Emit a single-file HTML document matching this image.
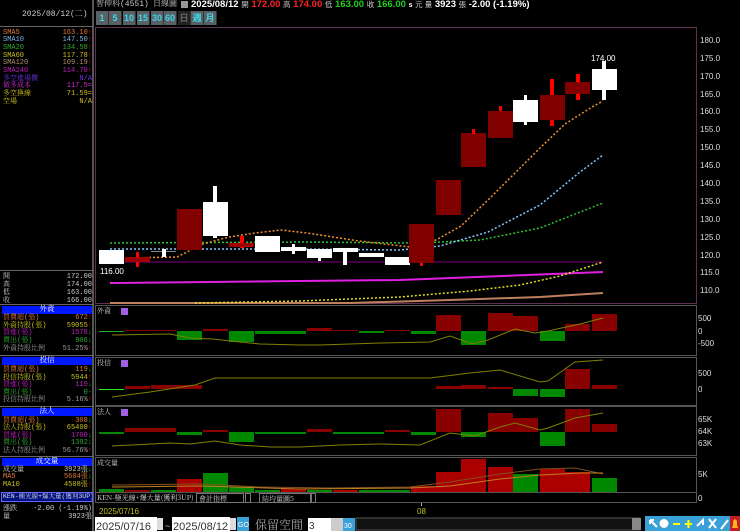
<!DOCTYPE html>
<html><head><meta charset="utf-8">
<style>
*{margin:0;padding:0;box-sizing:border-box}
body{width:740px;height:531px;background:#000;overflow:hidden;position:relative;font-family:"Liberation Mono","Noto Serif CJK TC",monospace;font-size:8px;color:#ccc}
.a{position:absolute;white-space:nowrap;line-height:8px}
.r{position:absolute;left:3px;width:89px;height:8px;line-height:8px;font-size:7px}
.r span:last-child{position:absolute;right:0}
.hd{position:absolute;left:2px;width:90px;height:8px;background:#0018ff;color:#fff;text-align:center;font-size:7.5px;line-height:8px}
.up{color:#f00}.dn{color:#0c0}
.btn{position:absolute;top:11px;height:14px;width:13px;background:#5a6066;color:#3cd8e8;font:bold 9px "Liberation Sans",sans-serif;text-align:center;line-height:14px;border-right:1px solid #333}
</style></head><body>
<div style="position:absolute;left:0;top:0;width:94px;height:531px;border-right:2px solid #555"></div>
<div style="position:absolute;left:0;top:26px;width:94px;height:1px;background:#666"></div>
<div class="a" style="left:22px;top:11px;color:#ccc;font-size:8px">2025/08/12(二)</div>

<div class="r" style="top:29px;color:#e07a3a"><span>SMA5</span><span>163.10<b class="up">↑</b></span></div>
<div class="r" style="top:36px;color:#7ab8e8"><span>SMA10</span><span>147.50<b class="up">↑</b></span></div>
<div class="r" style="top:44px;color:#2eaa2e"><span>SMA20</span><span>134.58<b class="up">↑</b></span></div>
<div class="r" style="top:52px;color:#c8c020"><span>SMA60</span><span>117.78<b class="up">↑</b></span></div>
<div class="r" style="top:59px;color:#b09070"><span>SMA120</span><span>109.19<b class="up">↑</b></span></div>
<div class="r" style="top:67px;color:#c020c0"><span>SMA240</span><span>114.70<b class="up">↑</b></span></div>
<div class="r" style="top:75px;color:#7030e0"><span>多空進場價</span><span>N/A</span></div>
<div class="r" style="top:82px;color:#d030d0"><span>做多成本</span><span>117.5=</span></div>
<div class="r" style="top:90px;color:#d0c020"><span>多空換線</span><span>71.59=</span></div>
<div class="r" style="top:98px;color:#d0c020"><span>空場</span><span>N/A</span></div>

<div style="position:absolute;left:0;top:270px;width:94px;height:1px;background:#666"></div>
<div class="r" style="top:273px;color:#ccc"><span>開</span><span>172.00</span></div>
<div class="r" style="top:281px;color:#ccc"><span>高</span><span>174.00</span></div>
<div class="r" style="top:289px;color:#ccc"><span>低</span><span>163.00</span></div>
<div class="r" style="top:297px;color:#ccc"><span>收</span><span>166.00</span></div>
<div style="position:absolute;left:0;top:304px;width:94px;height:1px;background:#666"></div>

<div class="hd" style="top:306px">外資</div>
<div class="r" style="top:314px;color:#e07a3a"><span>買賣超(張)</span><span>672<b class="up">↑</b></span></div>
<div class="r" style="top:322px;color:#c8c020"><span>外資持股(張)</span><span>59055<b class="up">↑</b></span></div>
<div class="r" style="top:329px;color:#c020c0"><span>買進(張)</span><span>1578<b class="dn">↓</b></span></div>
<div class="r" style="top:337px;color:#2eaa2e"><span>賣出(張)</span><span>906<b class="dn">↓</b></span></div>
<div class="r" style="top:345px;color:#999"><span>外資持股比例</span><span>51.25%<b class="up">↑</b></span></div>
<div style="position:absolute;left:0;top:355px;width:94px;height:1px;background:#666"></div>
<div class="hd" style="top:357px">投信</div>
<div class="r" style="top:366px;color:#e07a3a"><span>買賣超(張)</span><span>119<b class="dn">↓</b></span></div>
<div class="r" style="top:374px;color:#c8c020"><span>投信持股(張)</span><span>5944<b class="up">↑</b></span></div>
<div class="r" style="top:381px;color:#c020c0"><span>買進(張)</span><span>119<b class="dn">↓</b></span></div>
<div class="r" style="top:389px;color:#2eaa2e"><span>賣出(張)</span><span>0-</span></div>
<div class="r" style="top:396px;color:#999"><span>投信持股比例</span><span>5.16%<b class="up">↑</b></span></div>
<div style="position:absolute;left:0;top:406px;width:94px;height:1px;background:#666"></div>
<div class="hd" style="top:408px">法人</div>
<div class="r" style="top:417px;color:#e07a3a"><span>買賣超(張)</span><span>308<b class="dn">↓</b></span></div>
<div class="r" style="top:424px;color:#c8c020"><span>法人持股(張)</span><span>65400<b class="up">↑</b></span></div>
<div class="r" style="top:432px;color:#c020c0"><span>買進(張)</span><span>1700<b class="dn">↓</b></span></div>
<div class="r" style="top:439px;color:#2eaa2e"><span>賣出(張)</span><span>1392<b class="dn">↓</b></span></div>
<div class="r" style="top:447px;color:#999"><span>法人持股比例</span><span>56.76%<b class="up">↑</b></span></div>
<div style="position:absolute;left:0;top:456px;width:94px;height:1px;background:#666"></div>
<div class="hd" style="top:458px">成交量</div>
<div class="r" style="top:466px;color:#ccc"><span>成交量</span><span>3923張<b class="dn">↓</b></span></div>
<div class="r" style="top:473px;color:#e07a3a"><span>MA5</span><span>5604張<b class="dn">↓</b></span></div>
<div class="r" style="top:481px;color:#c8c020"><span>MA10</span><span>4508張<b class="up">↑</b></span></div>
<div style="position:absolute;left:1px;top:492px;width:92px;height:10px;border:1px solid #66f;background:#001080;color:#ddd;font-size:6.5px;line-height:8px;padding-left:1px;overflow:hidden;white-space:nowrap">KEN-極光線+爆大量(獲利3UP)</div>
<div class="r" style="top:505px;color:#ccc"><span>漲跌</span><span>-2.00 (-1.19%)</span></div>
<div class="r" style="top:513px;color:#ccc"><span>量</span><span>3923張</span></div>

<div class="a" style="left:96px;top:1px;font-size:8px;color:#ccc">智伸科(4551)</div>
<div class="a" style="left:153px;top:1px;font-size:8px;color:#ccc">日線圖</div>
<div style="position:absolute;left:181px;top:1px;width:7px;height:7px;background:#999"></div>
<div class="a" style="left:191px;top:0;font:bold 9.5px 'Liberation Sans',sans-serif;color:#fff;line-height:10px">2025/08/12 <span style="font-weight:normal;font-size:7.5px;color:#ccc">開</span> <span style="color:#f22">172.00</span> <span style="font-weight:normal;font-size:7.5px;color:#ccc">高</span> <span style="color:#f22">174.00</span> <span style="font-weight:normal;font-size:7.5px;color:#ccc">低</span> <span style="color:#2c2">163.00</span> <span style="font-weight:normal;font-size:7.5px;color:#ccc">收</span> <span style="color:#2c2">166.00</span> <span style="font-size:7px">s</span> <span style="font-weight:normal;font-size:7.5px;color:#ccc">元 量</span> 3923 <span style="font-weight:normal;font-size:7.5px;color:#ccc">張</span> -2.00 (-1.19%)</div>
<div class="btn" style="left:96px">1</div><div class="btn" style="left:109px">5</div><div class="btn" style="left:123px">10</div><div class="btn" style="left:137px">15</div><div class="btn" style="left:151px">30</div><div class="btn" style="left:164px">60</div>
<div class="btn" style="left:178px;background:#222;color:#666">日</div><div class="btn" style="left:191px">週</div><div class="btn" style="left:204px">月</div>

<svg style="position:absolute;left:0;top:0" width="740" height="531" font-family="Liberation Sans,sans-serif">
<rect x="95.5" y="27.5" width="601" height="276" fill="none" stroke="#603050"/>
<g fill="none" stroke="#555">
<rect x="95.5" y="305.5" width="601" height="50"/>
<rect x="95.5" y="357.5" width="601" height="48"/>
<rect x="95.5" y="406.5" width="601" height="49"/>
<rect x="95.5" y="457.5" width="601" height="35"/>
<rect x="95.5" y="492.5" width="601" height="10"/>
</g>
<g fill="#ddd" font-size="8">
<text x="700" y="43">180.0</text><text x="700" y="61">175.0</text><text x="700" y="79">170.0</text><text x="700" y="97">165.0</text><text x="700" y="114">160.0</text><text x="700" y="132">155.0</text><text x="700" y="150">150.0</text><text x="700" y="168">145.0</text><text x="700" y="186">140.0</text><text x="700" y="204">135.0</text><text x="700" y="222">130.0</text><text x="700" y="240">125.0</text><text x="700" y="258">120.0</text><text x="700" y="275">115.0</text><text x="700" y="293">110.0</text>
<text x="698" y="321">500</text><text x="698" y="334">0</text><text x="698" y="346">-500</text>
<text x="698" y="376">500</text><text x="698" y="392">0</text>
<text x="698" y="422">65K</text><text x="698" y="434">64K</text><text x="698" y="446">63K</text>
<text x="698" y="477">5K</text><text x="698" y="501">0</text>
</g>
<polyline points="110,262 603,262" stroke="#800080" stroke-width="1" fill="none"/>
<polyline points="110,283 400,280 603,272" stroke="#e020e0" stroke-width="2" fill="none"/>
<polyline points="110,303 350,303 450,300 540,297 603,293" stroke="#c08060" stroke-width="2" fill="none"/>
<polyline points="195,303 300,301 400,297 470,291 520,285 560,276 603,262" stroke="#e0e020" stroke-width="1.5" stroke-dasharray="2,2" fill="none"/>
<polyline points="110,243 300,242 420,243 480,240 540,228 603,203" stroke="#30c030" stroke-width="1.5" stroke-dasharray="2,2" fill="none"/>
<polyline points="110,249 300,249 400,250 440,246 488,232 540,205 580,172 603,155" stroke="#80c8ff" stroke-width="1.5" stroke-dasharray="2,2" fill="none"/>
<polyline points="125,258 177,257 203,244 229,237 255,233 281,230 307,233 333,237 359,241 385,244 410,247 436,240 461,226 488,200 513,175 540,148 565,124 592,107 603,101" stroke="#f09030" stroke-width="1.5" stroke-dasharray="2,2" fill="none"/>
<g>
<rect x="99" y="250" width="25" height="14" fill="#fff"/>
<rect x="136" y="252" width="3" height="15" fill="#f00"/><rect x="125" y="257" width="25" height="5" fill="#a00000"/>
<rect x="151" y="251" width="25" height="1" fill="#888"/><rect x="162" y="249" width="4" height="8" fill="#fff"/>
<rect x="177" y="209" width="25" height="41" fill="#800000"/>
<rect x="213" y="186" width="4" height="52" fill="#fff"/><rect x="203" y="202" width="25" height="34" fill="#fff"/>
<rect x="240" y="236" width="4" height="12" fill="#f00"/><rect x="229" y="243" width="25" height="4" fill="#a00000"/>
<rect x="255" y="236" width="25" height="16" fill="#fff"/>
<rect x="281" y="247" width="25" height="4" fill="#fff"/><rect x="292" y="244" width="3" height="10" fill="#fff"/>
<rect x="307" y="249" width="25" height="9" fill="#fff"/><rect x="318" y="249" width="3" height="12" fill="#fff"/>
<rect x="333" y="248" width="25" height="4" fill="#fff"/><rect x="343" y="248" width="4" height="17" fill="#fff"/>
<rect x="359" y="253" width="25" height="4" fill="#fff"/>
<rect x="385" y="257" width="25" height="8" fill="#fff"/>
<rect x="420" y="255" width="3" height="11" fill="#f00"/><rect x="409" y="224" width="25" height="39" fill="#800000"/>
<rect x="436" y="180" width="25" height="35" fill="#800000"/>
<rect x="461" y="133" width="25" height="34" fill="#800000"/><rect x="472" y="129" width="3" height="5" fill="#f00"/>
<rect x="488" y="111" width="25" height="27" fill="#800000"/><rect x="499" y="106" width="3" height="5" fill="#f00"/>
<rect x="524" y="95" width="3" height="30" fill="#fff"/><rect x="513" y="100" width="25" height="22" fill="#fff"/>
<rect x="550" y="79" width="4" height="47" fill="#f00"/><rect x="540" y="95" width="25" height="25" fill="#800000"/>
<rect x="576" y="74" width="4" height="26" fill="#f00"/><rect x="565" y="82" width="25" height="12" fill="#800000"/>
<rect x="602" y="61" width="4" height="39" fill="#fff"/><rect x="592" y="69" width="25" height="21" fill="#fff"/>
</g>
<text x="591" y="61" fill="#fff" font-size="8">174.00</text>
<text x="100" y="274" fill="#fff" font-size="8">116.00</text>
<g font-size="7" fill="#ccc" font-family="Noto Serif CJK TC,serif">
<text x="97" y="313">外資</text><text x="97" y="365">投信</text><text x="97" y="414">法人</text><text x="97" y="465">成交量</text>
</g>
<rect x="121" y="308" width="7" height="7" fill="#a060e0"/><rect x="121" y="360" width="7" height="7" fill="#a060e0"/><rect x="121" y="409" width="7" height="7" fill="#a060e0"/>
<g>
<rect x="99" y="331" width="25" height="1" fill="#2a2"/><rect x="125" y="330" width="51" height="1" fill="#800"/>
<rect x="177" y="331" width="25" height="9" fill="#080"/><rect x="203" y="329" width="25" height="2" fill="#800"/>
<rect x="229" y="331" width="25" height="11" fill="#080"/><rect x="255" y="331" width="51" height="3" fill="#080"/>
<rect x="307" y="328" width="25" height="3" fill="#800"/><rect x="333" y="330" width="25" height="1" fill="#800"/>
<rect x="359" y="331" width="25" height="2" fill="#080"/><rect x="385" y="330" width="25" height="1" fill="#800"/>
<rect x="411" y="331" width="25" height="3" fill="#080"/><rect x="436" y="315" width="25" height="16" fill="#800"/>
<rect x="461" y="331" width="25" height="14" fill="#080"/><rect x="488" y="313" width="25" height="18" fill="#800"/>
<rect x="513" y="316" width="25" height="15" fill="#800"/><rect x="540" y="331" width="25" height="10" fill="#080"/>
<rect x="565" y="324" width="25" height="7" fill="#800"/><rect x="592" y="314" width="25" height="17" fill="#800"/>
<polyline points="112,335 170,334 190,338 213,339 240,342 260,344 300,345 320,345 380,343 430,342 450,336 472,344 488,340 515,329 535,333 548,331 580,324 603,318" stroke="#808000" fill="none"/>
</g>
<g>
<rect x="99" y="389" width="25" height="1" fill="#2e2"/>
<rect x="125" y="386" width="25" height="3" fill="#800"/><rect x="151" y="385" width="51" height="4" fill="#800"/>
<rect x="436" y="386" width="25" height="3" fill="#800"/><rect x="461" y="385" width="25" height="4" fill="#800"/>
<rect x="488" y="387" width="25" height="2" fill="#800"/><rect x="513" y="389" width="25" height="7" fill="#080"/>
<rect x="540" y="389" width="25" height="8" fill="#080"/><rect x="565" y="369" width="25" height="20" fill="#800"/>
<rect x="592" y="385" width="25" height="4" fill="#800"/>
<polyline points="112,397 150,392 195,385 215,378 430,378 470,373 500,370 540,382 548,381 575,362 603,360" stroke="#808000" fill="none"/>
</g>
<g>
<rect x="99" y="432" width="25" height="2" fill="#080"/><rect x="125" y="428" width="51" height="4" fill="#800"/>
<rect x="177" y="432" width="25" height="3" fill="#080"/><rect x="203" y="430" width="25" height="2" fill="#800"/>
<rect x="229" y="432" width="25" height="10" fill="#080"/><rect x="255" y="432" width="51" height="2" fill="#080"/>
<rect x="307" y="429" width="25" height="3" fill="#800"/><rect x="333" y="432" width="51" height="2" fill="#080"/>
<rect x="385" y="430" width="25" height="2" fill="#800"/><rect x="411" y="432" width="25" height="3" fill="#080"/>
<rect x="436" y="409" width="25" height="23" fill="#800"/><rect x="461" y="432" width="25" height="5" fill="#080"/>
<rect x="488" y="413" width="25" height="19" fill="#800"/><rect x="513" y="418" width="25" height="14" fill="#800"/>
<rect x="540" y="432" width="25" height="14" fill="#080"/><rect x="565" y="409" width="25" height="23" fill="#800"/>
<rect x="592" y="424" width="25" height="8" fill="#800"/>
<polyline points="112,446 170,443 190,444 215,441 240,445 270,447 300,447 340,445 380,444 420,445 450,433 475,436 500,427 515,423 540,430 548,428 575,418 603,413" stroke="#808000" fill="none"/>
</g>
<g>
<rect x="99" y="489" width="25" height="3" fill="#080"/><rect x="125" y="490" width="25" height="2" fill="#800"/>
<rect x="151" y="490" width="25" height="2" fill="#080"/><rect x="177" y="479" width="25" height="13" fill="#a00"/>
<rect x="203" y="473" width="25" height="19" fill="#080"/><rect x="229" y="487" width="25" height="5" fill="#080"/>
<rect x="255" y="490" width="25" height="2" fill="#080"/><rect x="281" y="489" width="25" height="3" fill="#a00"/>
<rect x="307" y="490" width="25" height="2" fill="#080"/><rect x="333" y="490" width="25" height="2" fill="#a00"/>
<rect x="359" y="490" width="51" height="2" fill="#080"/><rect x="411" y="486" width="25" height="6" fill="#a00"/>
<rect x="436" y="472" width="25" height="20" fill="#a00"/><rect x="461" y="459" width="25" height="33" fill="#a00"/>
<rect x="488" y="467" width="25" height="25" fill="#a00"/><rect x="513" y="474" width="25" height="18" fill="#080"/>
<rect x="540" y="469" width="25" height="23" fill="#a00"/><rect x="565" y="472" width="25" height="20" fill="#a00"/>
<rect x="592" y="478" width="25" height="14" fill="#080"/>
<polyline points="112,485 200,484 260,487 330,488 410,487 450,482 500,474 540,469 575,468 603,474" stroke="#805020" fill="none"/>
<polyline points="112,487 200,486 300,489 410,488 450,486 500,479 540,475 580,473 603,473" stroke="#c08020" fill="none"/>
</g>
<text x="97" y="500" fill="#ddd" font-size="7" font-family="Noto Serif CJK TC,serif">KEN-極光線+爆大量(獲利3UP)</text>
<rect x="196.5" y="493.5" width="47" height="9" fill="#000" stroke="#777"/>
<text x="199" y="501" fill="#ccc" font-size="7" font-family="Noto Serif CJK TC,serif">會計指標</text>
<rect x="245.5" y="493.5" width="5" height="9" fill="#000" stroke="#777"/>
<rect x="259.5" y="493.5" width="51" height="9" fill="#000" stroke="#777"/>
<text x="262" y="501" fill="#ccc" font-size="7" font-family="Noto Serif CJK TC,serif">結均量圖5</text>
<rect x="311.5" y="493.5" width="4" height="9" fill="#000" stroke="#777"/>
<line x1="421.5" y1="503" x2="421.5" y2="506" stroke="#aaa"/>
<text x="417" y="514" fill="#c0c020" font-size="8">08</text>
<text x="99" y="514" fill="#c0c020" font-size="8">2025/07/16</text>
<rect x="95" y="517" width="62" height="14" fill="#fff"/><text x="96" y="530" font-size="11" fill="#333">2025/07/16</text>
<rect x="157" y="518" width="6" height="12" fill="#ddd"/>
<text x="165" y="529" fill="#ccc" font-size="9">~</text>
<rect x="172" y="517" width="58" height="14" fill="#fff"/><text x="173" y="530" font-size="11" fill="#333">2025/08/12</text>
<rect x="230" y="518" width="6" height="12" fill="#ddd"/>
<rect x="237" y="517" width="12" height="14" fill="#3aa0d8"/><text x="238" y="527" font-size="7" fill="#fff">GO</text>
<text x="255" y="529" fill="#aaa" font-size="12" font-family="Noto Serif CJK TC,serif">保留空間</text>
<rect x="308" y="518" width="23" height="13" fill="#fff"/><text x="309" y="529" font-size="10" fill="#333">3</text>
<rect x="331" y="518" width="12" height="13" fill="#ccc"/>
<rect x="343" y="518" width="12" height="13" fill="#3aa0d8"/><text x="344" y="528" font-size="7" fill="#fff">30</text>
<rect x="356" y="518" width="284" height="12" fill="#111" stroke="#555"/>
<rect x="632" y="518" width="9" height="12" fill="#888"/>
<rect x="645" y="516" width="95" height="15" fill="#3aa0d8"/>
<g stroke="#fff" stroke-width="2" fill="none">
<path d="M650 520 L657 527 M650 520 L650 524 M650 520 L654 520"/>
<circle cx="664" cy="523.5" r="4.5" fill="#fff" stroke="none"/>
<path d="M685 524 L692 524 M688.5 520 L688.5 528" stroke="#ff0"/>
<path d="M697 526 L703 520 L703 525"/>
<path d="M709 519 L716 528 M716 519 L709 528"/>
<path d="M721 529 L728 520"/>
</g>
<path d="M673 524 L680 524" stroke="#ff0" stroke-width="2"/>
<rect x="730" y="516" width="10" height="15" fill="#c02020"/>
<path d="M732 528 L738 528 L737 525 L737 521 L735 519 L733 521 L733 525 Z" fill="#ffb020"/>
</svg>
</body></html>
